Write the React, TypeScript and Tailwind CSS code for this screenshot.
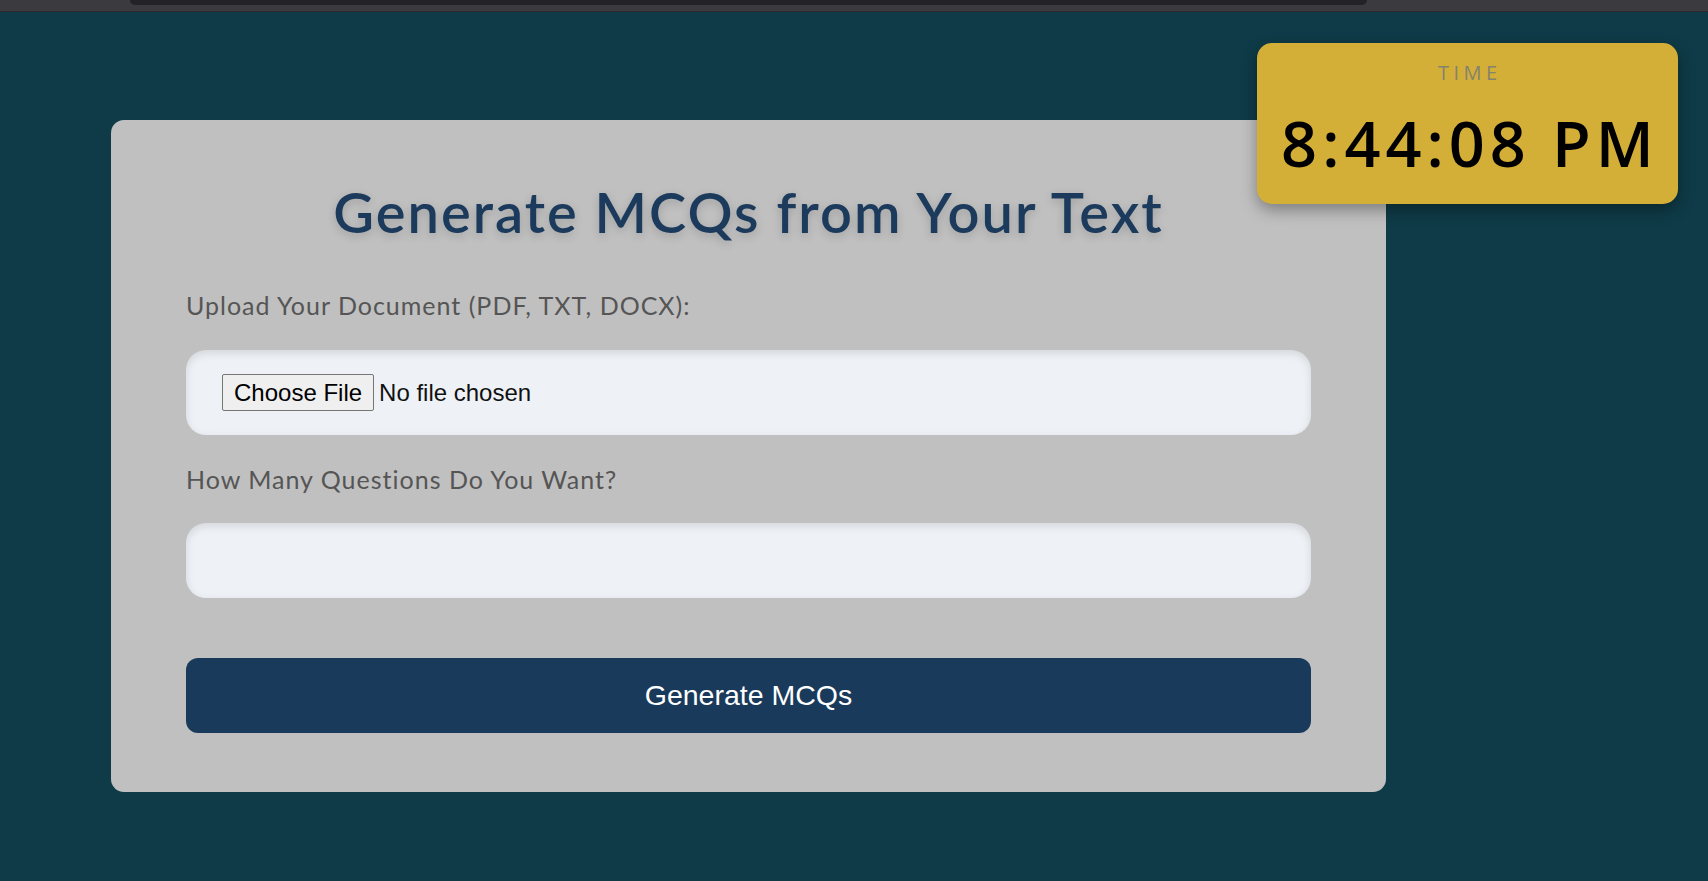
export default function App() {
  return (
    <div className="min-h-screen flex flex-col bg-[#0e3b47]">
      {/* browser chrome strip */}
      <div className="h-[12px] bg-[#3b3a3f] border-b border-[#2b2a2e] pl-[130px]">
        <div className="h-[5px] w-[1237px] bg-[#232227] rounded-b-[7px]" />
      </div>

      <div className="relative flex-1">
        <div className="ml-[111px] mt-[108px] w-[1275px] bg-[#c0c0c0] rounded-[13px] px-[75px] pt-[58px] pb-[59px]">
          <h1 className="text-center font-['Lato',sans-serif] font-semibold text-[56px] leading-[1.2] tracking-[2px] text-[#1b3a5c] mb-[47px] [text-shadow:0_3px_10px_rgba(0,0,0,0.18)]">
            Generate MCQs from Your Text
          </h1>

          <label className="block font-['Lato',sans-serif] text-[25px] leading-[1.1] tracking-[1px] text-[#555555] mb-[30px]">
            Upload Your Document (PDF, TXT, DOCX):
          </label>
          <div className="h-[85px] flex items-center px-[36px] rounded-[20px] bg-[#eef2f6] shadow-[inset_0_3px_8px_rgba(0,0,0,0.12)] mb-[31px]">
            <input
              type="file"
              className="font-['Liberation_Sans',Arial,sans-serif] text-[24px] leading-[27px] text-[#111] file:font-['Liberation_Sans',Arial,sans-serif] file:text-[24px] file:leading-[27px] file:text-black file:bg-[#efefef] file:border file:border-solid file:border-[#767676] file:rounded-[2px] file:px-[11px] file:py-[4px] file:mr-[5px]"
            />
          </div>

          <label className="block font-['Lato',sans-serif] text-[25px] leading-[1.1] tracking-[1px] text-[#555555] mb-[30px]">
            How Many Questions Do You Want?
          </label>
          <input
            type="number"
            className="block w-full h-[75px] px-[36px] rounded-[20px] bg-[#eef2f6] shadow-[inset_0_3px_8px_rgba(0,0,0,0.12)] outline-none text-[24px] mb-[60px]"
          />

          <button className="block w-full h-[75px] rounded-[12px] bg-[#1a3a5c] text-white font-['Liberation_Sans',Arial,sans-serif] text-[28.5px]">
            Generate MCQs
          </button>
        </div>

        <div className="absolute left-[1257px] top-[31px] w-[421px] h-[161px] rounded-[15px] bg-[#d4af37] shadow-[0_6px_16px_rgba(0,0,0,0.35)] text-center pt-[20px] font-['Open_Sans',sans-serif]">
          <div className="text-[20px] leading-none tracking-[4.5px] pl-[4.5px] text-[#85826f]">TIME</div>
          <div className="mt-[28px] text-[63px] leading-none font-semibold tracking-[5px] pl-[5px] text-black">
            8:44:08 PM
          </div>
        </div>
      </div>
    </div>
  );
}
